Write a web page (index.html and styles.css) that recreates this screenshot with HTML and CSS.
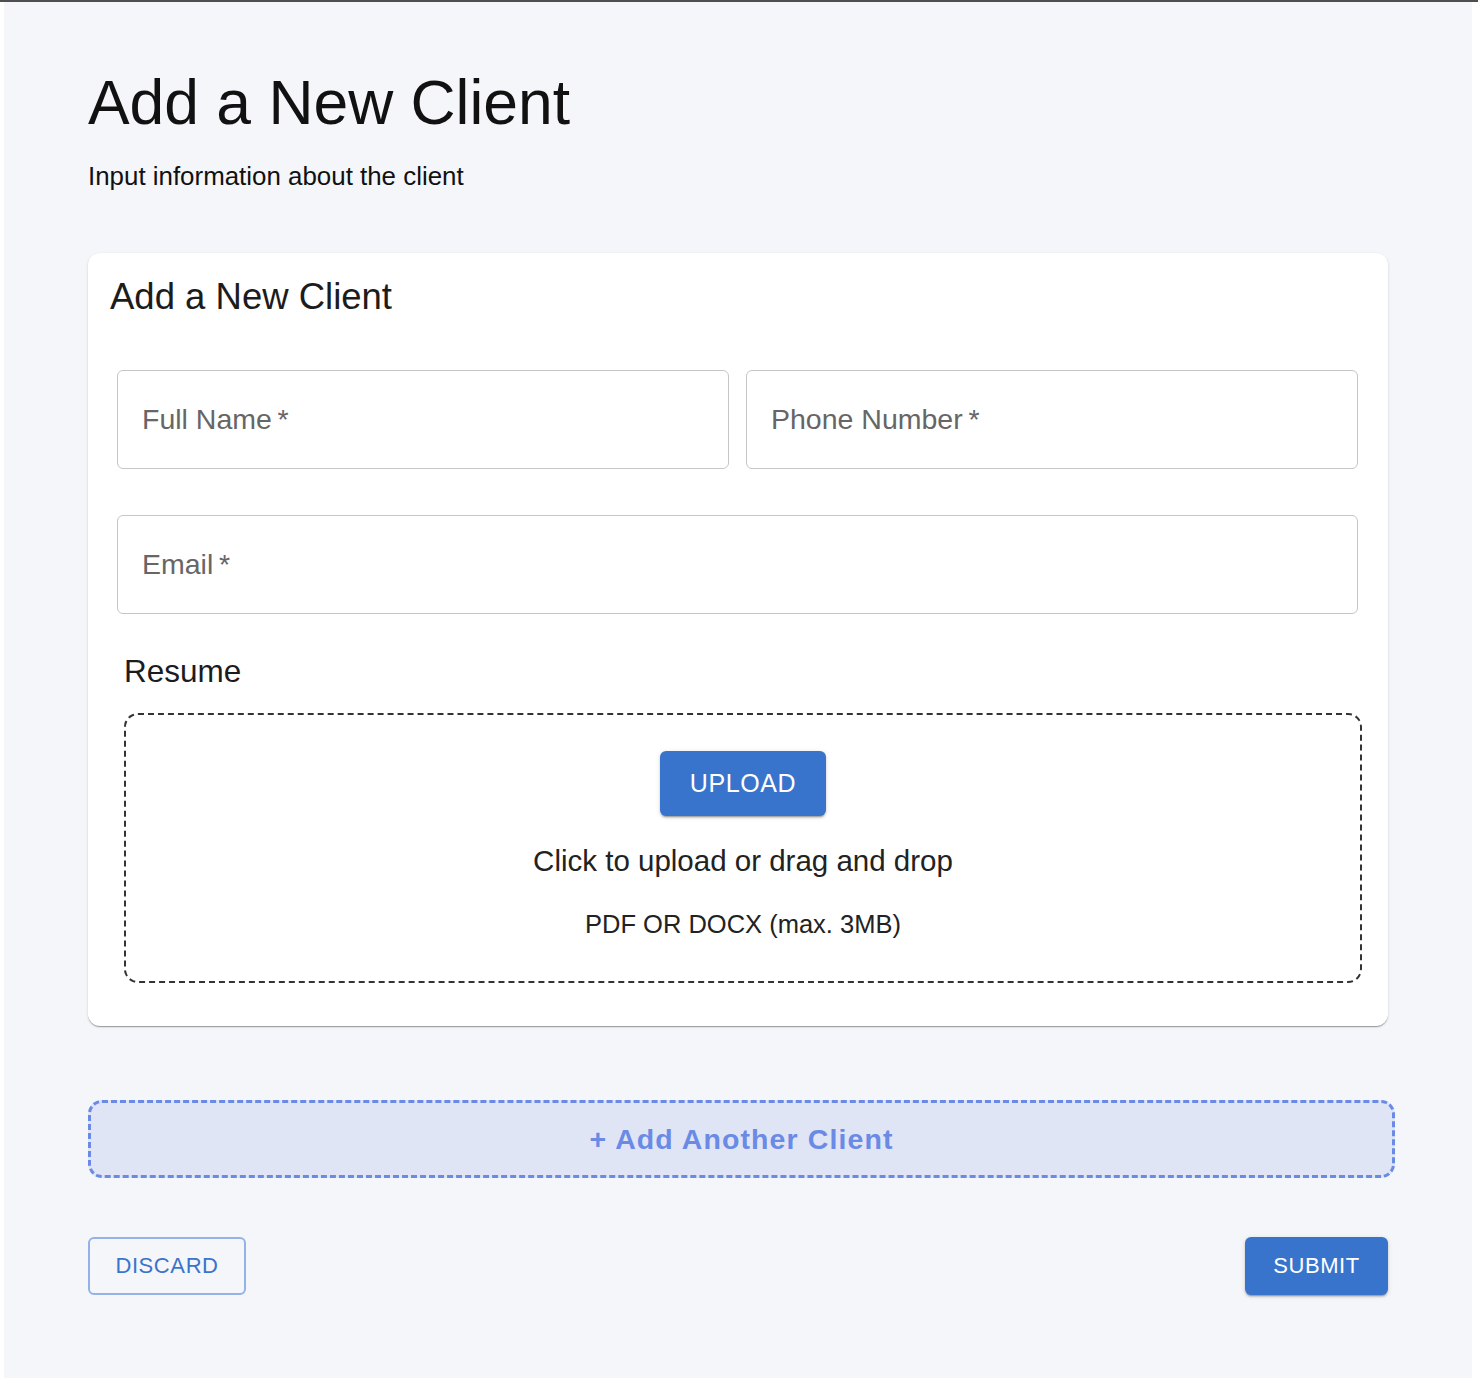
FILE: index.html
```html
<!DOCTYPE html>
<html lang="en">
<head>
<meta charset="utf-8">
<title>Add a New Client</title>
<link rel="stylesheet" href="styles.css">
</head>
<body>
<div class="frame">
  <main class="page">
    <h1 class="page-title">Add a New Client</h1>
    <p class="page-subtitle">Input information about the client</p>

    <section class="card">
      <h2 class="card-title">Add a New Client</h2>
      <div class="fields">
        <div class="field"><span class="label">Full Name&#8201;*</span></div>
        <div class="field"><span class="label">Phone Number&#8201;*</span></div>
        <div class="field field-wide"><span class="label">Email&#8201;*</span></div>
      </div>
      <div class="resume">
        <h3 class="resume-title">Resume</h3>
        <div class="dropzone">
          <button class="btn btn-contained btn-upload" type="button">UPLOAD</button>
          <p class="drop-text">Click to upload or drag and drop</p>
          <p class="drop-hint">PDF OR DOCX (max. 3MB)</p>
        </div>
      </div>
    </section>

    <button class="add-another" type="button">+ Add Another Client</button>

    <div class="actions">
      <button class="btn btn-outlined" type="button">DISCARD</button>
      <button class="btn btn-contained btn-submit" type="button">SUBMIT</button>
    </div>
  </main>
</div>
</body>
</html>
```

FILE: styles.css
```css
* { box-sizing: border-box; }

html, body {
  margin: 0;
  padding: 0;
  background: #ffffff;
  font-family: "Liberation Sans", Arial, Helvetica, sans-serif;
}

.frame {
  border-top: 2px solid #4f4f4f;
}

.page {
  margin: 0 6px 0 4px;
  min-height: 1376px;
  background: #f4f6fa;
  padding: 70px 84px 40px;
}

.page-title {
  margin: 0;
  font-size: 62.4px;
  line-height: 1;
  font-weight: 400;
  color: #111111;
}

.page-subtitle {
  margin: 27px 0 0;
  font-size: 25.9px;
  line-height: 31px;
  color: #111111;
}

.card {
  margin-top: 61px;
  background: #ffffff;
  border-radius: 12px;
  padding: 22px 22px 43px;
  box-shadow: 0 2px 1px -1px rgba(0,0,0,0.2), 0 1px 1px 0 rgba(0,0,0,0.14), 0 1px 3px 0 rgba(0,0,0,0.12);
}

.card-title {
  margin: 0;
  font-size: 36.5px;
  line-height: 44px;
  font-weight: 400;
  color: #1c1c1c;
}

.fields {
  margin: 51px 8px 0 7px;
  display: grid;
  grid-template-columns: 1fr 1fr;
  column-gap: 17px;
  row-gap: 46px;
}

.field {
  height: 99px;
  border: 1px solid #c6c6c6;
  border-radius: 6px;
  display: flex;
  align-items: center;
  padding: 0 24px;
}

.field-wide {
  grid-column: 1 / -1;
}

.label {
  font-size: 28.5px;
  color: #666666;
}

.resume {
  margin: 39px 4px 0 14px;
}

.resume-title {
  margin: 0;
  font-size: 31.5px;
  line-height: 37px;
  font-weight: 400;
  color: #1c1c1c;
}

.dropzone {
  margin-top: 23px;
  border: 2px dashed #333333;
  border-radius: 14px;
  padding: 36px 20px 41px;
  display: flex;
  flex-direction: column;
  align-items: center;
}

.btn {
  font-family: "Liberation Sans", Arial, Helvetica, sans-serif;
  border-radius: 6px;
  cursor: pointer;
  letter-spacing: 0.6px;
}

.btn-contained {
  background: #3974cc;
  color: #ffffff;
  border: none;
  box-shadow: 0 3px 1px -2px rgba(0,0,0,0.2), 0 2px 2px 0 rgba(0,0,0,0.14), 0 1px 5px 0 rgba(0,0,0,0.12);
}

.btn-upload {
  width: 166px;
  height: 65px;
  font-size: 25px;
}

.drop-text {
  margin: 27px 0 0;
  font-size: 29.5px;
  line-height: 35px;
  color: #222222;
}

.drop-hint {
  margin: 31px 0 0;
  font-size: 25.5px;
  line-height: 31px;
  color: #222222;
}

.add-another {
  display: block;
  width: calc(100% + 7px);
  margin: 74px -7px 0 0;
  height: 78px;
  background: #dfe5f5;
  border: 3px dashed #6a8ae6;
  border-radius: 14px;
  font-family: "Liberation Sans", Arial, Helvetica, sans-serif;
  font-weight: 700;
  font-size: 28.5px;
  letter-spacing: 1.1px;
  color: #6a8ae6;
  cursor: pointer;
}

.actions {
  margin-top: 59px;
  display: flex;
  justify-content: space-between;
}

.btn-outlined {
  width: 158px;
  height: 58px;
  background: transparent;
  border: 2px solid #93b2e8;
  color: #3a74cb;
  font-size: 22px;
}

.btn-submit {
  width: 143px;
  height: 58px;
  font-size: 22px;
}
```
